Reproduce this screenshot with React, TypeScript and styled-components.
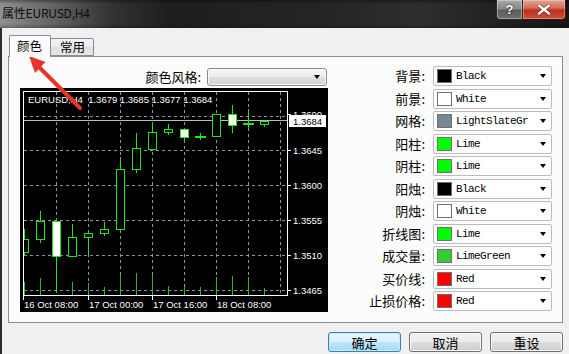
import React from "react";
import styled, { createGlobalStyle } from "styled-components";

const GlobalStyle = createGlobalStyle`
  html, body { margin: 0; padding: 0; background: #f0f0f0; overflow: hidden; }
  #root { width: 569px; height: 354px; }
`;

const CJK = `"Noto Sans CJK SC", "Noto Sans", sans-serif`;

const Window = styled.div`
  position: relative;
  width: 569px;
  height: 354px;
  display: flex;
  flex-direction: column;
  font-family: ${CJK};
  background: #f0f0f0;
  overflow: hidden;
`;

const TitleBar = styled.div`
  flex: none;
  height: 28px;
  display: flex;
  align-items: flex-start;
  background:
    linear-gradient(to bottom, rgba(0,0,0,0.35) 0px, rgba(0,0,0,0) 4px, rgba(0,0,0,0) 24px, rgba(0,0,0,0.25) 28px),
    linear-gradient(to right, #8f8f8f 0px, #6a6a6a 45px, #333 110px, #1e1e1e 170px, #252525 330px, #2e2e2e 420px, #151515 569px);
`;

const TitleText = styled.div`
  padding: 5px 0 0 2px;
  font-family: "Noto Sans CJK SC", "Liberation Sans", sans-serif;
  font-size: 12px;
  line-height: 16px;
  color: #0c0c0c;
  letter-spacing: -0.2px;
`;

const CaptionButtons = styled.div`
  margin-left: auto;
  margin-right: 3px;
  display: flex;
`;

const HelpButton = styled.div`
  box-sizing: border-box;
  width: 27px;
  height: 20px;
  border: 1px solid #2a2a2a;
  border-top: none;
  border-radius: 0 0 0 4px;
  background: linear-gradient(to bottom, #a9a9a9 0%, #8a8a8a 45%, #5d5d5d 55%, #6f6f6f 100%);
  box-shadow: inset 0 0 0 1px rgba(255,255,255,0.35);
  display: flex;
  align-items: center;
  justify-content: center;
  color: #fff;
  font-family: "Liberation Sans", sans-serif;
  font-weight: bold;
  font-size: 13px;
  text-shadow: 0 0 2px #000;
`;

const CloseButton = styled.div`
  box-sizing: border-box;
  width: 43px;
  height: 20px;
  border: 1px solid #3a1410;
  border-top: none;
  border-left: none;
  border-radius: 0 0 4px 0;
  background: linear-gradient(to bottom, #e8a493 0%, #d4705a 40%, #b8301c 55%, #d0503a 100%);
  box-shadow: inset 0 0 0 1px rgba(255,255,255,0.3);
  display: flex;
  align-items: center;
  justify-content: center;
`;

const Client = styled.div`
  flex: 1;
  display: flex;
  flex-direction: column;
  border-left: 2px solid #2b2b2b;
  min-height: 0;
`;

const TabStrip = styled.div`
  flex: none;
  position: relative;
  z-index: 1;
  height: 29px;
  margin-bottom: -1px;
  padding-left: 7px;
  display: flex;
  align-items: flex-end;
`;

const Tab = styled.div<{ $active?: boolean }>`
  box-sizing: border-box;
  height: ${(p) => (p.$active ? 22 : 18)}px;
  margin-bottom: ${(p) => (p.$active ? 0 : 1)}px;
  margin-right: ${(p) => (p.$active ? -1 : 0)}px;
  position: relative;
  z-index: ${(p) => (p.$active ? 2 : 1)};
  padding: ${(p) => (p.$active ? "2px 8px 0 7px" : "0 8px 0 9px")};
  border: 1px solid #898c95;
  border-bottom: ${(p) => (p.$active ? "none" : "1px solid #898c95")};
  border-radius: 2px 2px 0 0;
  background: ${(p) =>
    p.$active ? "#fcfcfc" : "linear-gradient(to bottom, #f4f4f4 0%, #eaeaea 50%, #dedede 51%, #e6e6e6 100%)"};
  font-size: 12.5px;
  line-height: 16px;
  color: #000;
  display: flex;
  align-items: ${(p) => (p.$active ? "flex-start" : "center")};
`;

const Panel = styled.div`
  flex: none;
  position: relative;
  z-index: 0;
  box-sizing: border-box;
  width: 555px;
  height: 267px;
  margin-left: 6px;
  border: 1px solid #898c95;
  background: #fcfcfc;
  display: flex;
`;

const LeftPane = styled.div`
  width: 308px;
  padding: 11px 0 0 11px;
  display: flex;
  flex-direction: column;
  gap: 2px;
`;

const SchemeRow = styled.div`
  height: 18px;
  display: flex;
  align-items: center;
  justify-content: flex-end;
  gap: 6px;
  padding-right: 1px;
`;

const FieldLabel = styled.span`
  font-size: 13px;
  line-height: 16px;
  color: #000;
  white-space: nowrap;
`;

const SchemeCombo = styled.div`
  box-sizing: border-box;
  width: 120px;
  height: 18px;
  border: 1px solid #8a8a8a;
  border-radius: 3px;
  background: linear-gradient(to bottom, #f6f6f6 0%, #ececec 50%, #dfdfdf 51%, #d4d4d4 100%);
  box-shadow: inset 0 0 0 1px #fbfbfb;
  display: flex;
  align-items: center;
  justify-content: flex-end;
  padding-right: 6px;
`;

const DownArrow = styled.span`
  width: 0;
  height: 0;
  border-left: 3.5px solid transparent;
  border-right: 3.5px solid transparent;
  border-top: 4px solid #000;
`;

const ChartBox = styled.div`
  width: 308px;
  height: 224px;
  background: #000;
`;

const ChartSvg = styled.svg`
  display: block;
  font-family: "Liberation Sans", Arial, sans-serif;
  font-size: 9.5px;
`;

const RightPane = styled.div`
  margin-left: auto;
  padding: 9px 10px 0 0;
  display: flex;
  flex-direction: column;
  gap: 2.5px;
`;

const ColorRow = styled.div`
  height: 20px;
  display: flex;
  align-items: center;
  justify-content: flex-end;
  gap: 8px;
`;

const ColorSelect = styled.div`
  box-sizing: border-box;
  width: 119px;
  height: 20px;
  border: 1px solid #bcbcbc;
  border-radius: 2px;
  background: #fff;
  display: flex;
  align-items: center;
  padding: 0 5px 0 3px;
`;

const Swatch = styled.span<{ $color: string }>`
  box-sizing: border-box;
  width: 15px;
  height: 14px;
  border: 1px solid #707070;
  background: ${(p) => p.$color};
  flex: none;
`;

const ColorName = styled.span`
  margin-left: 4px;
  flex: 1;
  font-family: "Liberation Mono", monospace;
  font-size: 11px;
  letter-spacing: -0.6px;
  color: #000;
  line-height: 14px;
`;

const ButtonRow = styled.div`
  flex: none;
  margin-top: 9px;
  padding-right: 6px;
  display: flex;
  justify-content: flex-end;
  gap: 8px;
`;

const DialogButton = styled.div<{ $default?: boolean }>`
  box-sizing: border-box;
  width: 73px;
  height: 20px;
  border: 1px solid ${(p) => (p.$default ? "#3c7fb1" : "#707070")};
  border-radius: 3px;
  background: ${(p) =>
    p.$default
      ? "linear-gradient(to bottom, #eaf6fd 0%, #d9f0fc 50%, #bee6fd 51%, #a7d9f5 100%)"
      : "linear-gradient(to bottom, #f2f2f2 0%, #ebebeb 50%, #dddddd 51%, #cfcfcf 100%)"};
  box-shadow: inset 0 0 0 1px ${(p) => (p.$default ? "#c9e9fb" : "#fbfbfb")};
  display: flex;
  align-items: center;
  justify-content: center;
  font-size: 13px;
  color: #000;
`;

const ArrowOverlay = styled.svg`
  position: absolute;
  left: 20px;
  top: 48px;
  pointer-events: none;
`;

const rows = [
  { label: "背景", name: "Black", color: "#000000" },
  { label: "前景", name: "White", color: "#ffffff" },
  { label: "网格", name: "LightSlateGr", color: "#778899" },
  { label: "阳柱", name: "Lime", color: "#00ff00" },
  { label: "阴柱", name: "Lime", color: "#00ff00" },
  { label: "阳烛", name: "Black", color: "#000000" },
  { label: "阴烛", name: "White", color: "#ffffff" },
  { label: "折线图", name: "Lime", color: "#00ff00" },
  { label: "成交量", name: "LimeGreen", color: "#32cd32" },
  { label: "买价线", name: "Red", color: "#ff0000" },
  { label: "止损价格", name: "Red", color: "#ff0000" },
];

type Candle = [number, number, number, number, number, "b" | "w" | "d"];
const candles: Candle[] = [
  [24, 229, 239, 252, 256, "b"],
  [40, 211, 221, 239, 243, "b"],
  [56, 221, 221, 256, 292, "w"],
  [72, 224, 237, 256, 256, "b"],
  [88, 233, 233, 237, 254, "b"],
  [104, 222, 229, 233, 236, "b"],
  [120, 157, 169, 229, 229, "b"],
  [136, 133, 148, 169, 173, "b"],
  [152, 122, 132, 149, 151, "b"],
  [168, 124, 129, 132, 135, "b"],
  [184, 129, 129, 137, 140, "w"],
  [200, 133, 137, 137, 140, "d"],
  [216, 114, 114, 136, 136, "b"],
  [232, 105, 114, 125, 133, "w"],
  [248, 109, 124, 124, 129, "d"],
  [264, 121, 121, 124, 127, "b"],
];
const volumes: [number, number][] = [
  [24, 282], [40, 278], [72, 282], [88, 283], [104, 287], [120, 275], [136, 273], [152, 275],
  [168, 286], [184, 287], [200, 287], [216, 277], [232, 276], [248, 277], [264, 288],
];
const priceLevels: [string, number][] = [
  ["1.3690", 114], ["1.3645", 150], ["1.3600", 185], ["1.3555", 220], ["1.3510", 255], ["1.3465", 290],
];
const hGrid = [116, 150, 185, 220, 255, 290];
const vGrid = [56, 88, 120, 152, 184, 216, 248, 280];
const timeLabels: [string, number][] = [
  ["16 Oct 08:00", 23], ["17 Oct 00:00", 88], ["17 Oct 16:00", 152], ["18 Oct 08:00", 216],
];

const LIME = "#1ee61e";
const GRID = "#8794a2";

function Chart() {
  return (
    <ChartBox>
      <ChartSvg width={308} height={224} viewBox="20 88 308 224">
        <defs>
          <clipPath id="plot">
            <rect x={24} y={92} width={264} height={204} />
          </clipPath>
        </defs>
        <g clipPath="url(#plot)">
          {hGrid.map((y) => (
            <line key={"h" + y} x1={24} x2={288} y1={y + 0.5} y2={y + 0.5} stroke={GRID} strokeDasharray="3 3" />
          ))}
          {vGrid.map((x) => (
            <line key={"v" + x} x1={x + 0.5} x2={x + 0.5} y1={92} y2={296} stroke={GRID} strokeDasharray="3 3" />
          ))}
          <line x1={24} x2={288} y1={120.5} y2={120.5} stroke="#b4bcc4" />
          {volumes.map(([x, top]) => (
            <line key={"vol" + x} x1={x + 0.5} x2={x + 0.5} y1={top} y2={296} stroke="#2fb52f" />
          ))}
          {candles.map(([x, wt, bt, bb, wb, t]) => (
            <g key={"c" + x}>
              <line x1={x + 0.5} x2={x + 0.5} y1={wt} y2={wb} stroke={LIME} />
              {t === "d" ? (
                <rect x={x - 5} y={bt - 1} width={11} height={2} fill={LIME} />
              ) : (
                <rect
                  x={x - 3.5}
                  y={bt + 0.5}
                  width={8}
                  height={bb - bt}
                  fill={t === "w" ? "#ffffff" : "#000000"}
                  stroke={LIME}
                />
              )}
            </g>
          ))}
        </g>
        <rect x={23.5} y={91.5} width={264} height={204} fill="none" stroke="#ffffff" />
        <text x={28} y={103} fill="#ffffff">
          EURUSD,H4&#160;&#160;1.3679 1.3685 1.3677 1.3684
        </text>
        {priceLevels.map(([p, y]) => (
          <g key={p}>
            <line x1={288} x2={291} y1={y + 0.5} y2={y + 0.5} stroke="#ffffff" />
            <text x={293} y={y + 3.5} fill="#ffffff">
              {p}
            </text>
          </g>
        ))}
        <rect x={289} y={115} width={37} height={12} fill="#ffffff" />
        <text x={293} y={124.5} fill="#000000">
          1.3684
        </text>
        {timeLabels.map(([t, x]) => (
          <g key={t}>
            <line x1={x + 0.5} x2={x + 0.5} y1={296} y2={300} stroke="#ffffff" />
            <text x={x + 1} y={308} fill="#ffffff">
              {t}
            </text>
          </g>
        ))}
      </ChartSvg>
    </ChartBox>
  );
}

export default function App() {
  return (
    <Window>
      <GlobalStyle />
      <TitleBar>
        <TitleText>属性EURUSD,H4</TitleText>
        <CaptionButtons>
          <HelpButton>?</HelpButton>
          <CloseButton>
            <svg width="14" height="11" viewBox="0 0 14 11">
              <path d="M2 1.5 L12 9.5 M12 1.5 L2 9.5" stroke="#2a0a05" strokeWidth="3.6" strokeLinecap="round" opacity="0.5" />
              <path d="M2 1.5 L12 9.5 M12 1.5 L2 9.5" stroke="#ffffff" strokeWidth="2.4" strokeLinecap="round" />
            </svg>
          </CloseButton>
        </CaptionButtons>
      </TitleBar>
      <Client>
        <TabStrip>
          <Tab $active>颜色</Tab>
          <Tab>常用</Tab>
        </TabStrip>
        <Panel>
          <LeftPane>
            <SchemeRow>
              <FieldLabel>颜色风格:</FieldLabel>
              <SchemeCombo>
                <DownArrow />
              </SchemeCombo>
            </SchemeRow>
            <Chart />
          </LeftPane>
          <RightPane>
            {rows.map((r) => (
              <ColorRow key={r.label}>
                <FieldLabel>{r.label}:</FieldLabel>
                <ColorSelect>
                  <Swatch $color={r.color} />
                  <ColorName>{r.name}</ColorName>
                  <DownArrow />
                </ColorSelect>
              </ColorRow>
            ))}
          </RightPane>
        </Panel>
        <ButtonRow>
          <DialogButton $default>确定</DialogButton>
          <DialogButton>取消</DialogButton>
          <DialogButton>重设</DialogButton>
        </ButtonRow>
      </Client>
      <ArrowOverlay width={70} height={70} viewBox="20 48 70 70">
        <line x1={80} y1={108} x2={38} y2={66} stroke="#e5352b" strokeWidth={4} strokeLinecap="round" />
        <polygon points="29,56 45.5,62 35,73" fill="#e5352b" />
      </ArrowOverlay>
    </Window>
  );
}
